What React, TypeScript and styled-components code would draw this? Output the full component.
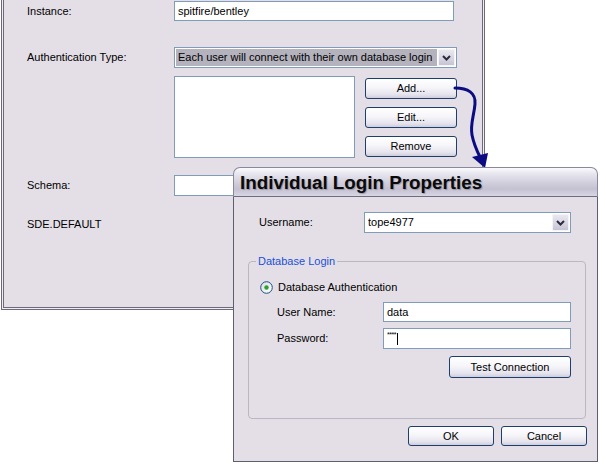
import React from "react";
import styled, { createGlobalStyle } from "styled-components";

const GlobalStyle = createGlobalStyle`
  html, body {
    margin: 0;
    padding: 0;
    background: #ffffff;
  }
  body {
    font-family: "Liberation Sans", Arial, sans-serif;
    font-size: 11px;
    color: #000;
  }
`;

const Desktop = styled.div`
  position: relative;
  width: 600px;
  height: 466px;
  overflow: hidden;
  background: #ffffff;
`;

/* ---------- the connection properties window behind ---------- */

const BackWindow = styled.div`
  position: absolute;
  left: 1px;
  top: -10px;
  width: 484px;
  height: 320px;
  box-sizing: border-box;
  border: 1px solid #6c6a7a;
  box-shadow: inset 0 0 0 1px #f1eef3, inset 0 0 0 2px #6c6a7a;
  background: #e4dfe7;
  padding: 10px 0 0 25px;
  display: flex;
  flex-direction: column;
`;

const Row = styled.div<{ $gap?: number; $indent?: number }>`
  display: flex;
  align-items: center;
  margin-top: ${(p) => p.$gap ?? 0}px;
  padding-left: ${(p) => p.$indent ?? 0}px;
`;

const TopRow = styled(Row)`
  align-items: flex-start;
`;

const Label = styled.div<{ $w: number }>`
  width: ${(p) => p.$w}px;
  flex: none;
  line-height: 13px;
  white-space: nowrap;
`;

const TextBox = styled.div<{ $w: number; $h?: number }>`
  width: ${(p) => p.$w}px;
  height: ${(p) => p.$h ?? 20}px;
  box-sizing: border-box;
  border: 1px solid #7f9db9;
  background: #ffffff;
  padding: 0 3px;
  display: flex;
  align-items: center;
  line-height: 13px;
  white-space: nowrap;
`;

const ListBox = styled.div`
  width: 181px;
  height: 82px;
  box-sizing: border-box;
  border: 1px solid #7f9db9;
  background: #ffffff;
  flex: none;
`;

const ComboFrame = styled.div<{ $w: number }>`
  width: ${(p) => p.$w}px;
  height: 21px;
  box-sizing: border-box;
  border: 1px solid #7f9db9;
  background: #ffffff;
  display: flex;
  align-items: stretch;
  padding: 1px;
  gap: 1px;
`;

const ComboText = styled.div<{ $selected?: boolean }>`
  flex: 1;
  display: flex;
  align-items: center;
  padding: 0 2px;
  line-height: 13px;
  white-space: nowrap;
  overflow: hidden;
  background: ${(p) => (p.$selected ? "#b3b2bd" : "transparent")};
`;

const DropButton = styled.div`
  width: 17px;
  flex: none;
  box-sizing: border-box;
  border: 1px solid #f4f3f8;
  border-radius: 1px;
  background: linear-gradient(180deg, #e9e8f0 0%, #d6d4e0 60%, #c6c4d3 100%);
  display: flex;
  align-items: center;
  justify-content: center;
`;

const ButtonStack = styled.div`
  display: flex;
  flex-direction: column;
  gap: 8px;
  margin: 2px 0 0 10px;
`;

const Button = styled.div<{ $w: number; $h?: number }>`
  width: ${(p) => p.$w}px;
  height: ${(p) => p.$h ?? 21}px;
  box-sizing: border-box;
  border: 1px solid #1d3f6a;
  border-radius: 3px;
  background: linear-gradient(
    180deg,
    #ffffff 0%,
    #f6f5f9 45%,
    #e6e5ee 80%,
    #cfcddd 100%
  );
  display: flex;
  align-items: center;
  justify-content: center;
  line-height: 13px;
  white-space: nowrap;
`;

const Chevron = () => (
  <svg width="9" height="6" viewBox="0 0 9 6">
    <path d="M1 1 L4.5 4.5 L8 1" fill="none" stroke="#2c2c3e" strokeWidth="2" />
  </svg>
);

/* ---------- the individual login dialog in front ---------- */

const Dialog = styled.div`
  position: absolute;
  left: 233px;
  top: 167px;
  width: 365px;
  height: 295px;
  display: flex;
  flex-direction: column;
`;

const TitleBar = styled.div`
  height: 30px;
  flex: none;
  box-sizing: border-box;
  border: 1px solid #8a889c;
  border-bottom: 1px solid #6e6c80;
  border-radius: 7px 7px 0 0;
  background: linear-gradient(
    180deg,
    #fbfbfd 0%,
    #e9e8f0 18%,
    #cfcddb 55%,
    #c4c2d2 75%,
    #d8d6e3 100%
  );
  padding: 0 0 0 6px;
  display: flex;
  align-items: center;
`;

const TitleText = styled.div`
  font-size: 18.8px;
  font-weight: bold;
  color: #0a0a0a;
  line-height: 22px;
  padding-top: 2px;
  text-shadow: 1px 1px 1px rgba(60, 58, 80, 0.35);
  white-space: nowrap;
`;

const DialogBody = styled.div`
  flex: 1;
  box-sizing: border-box;
  border: 1px solid #5f5d72;
  border-top: none;
  background: #e4dfe7;
  padding: 15px 10px 0 14px;
  display: flex;
  flex-direction: column;
`;

const GroupBox = styled.fieldset`
  width: 338px;
  box-sizing: border-box;
  margin: 22px 0 0 0;
  padding: 0;
  border: 1px solid #b9b7c4;
  border-radius: 4px;
  min-width: 0;
`;

const GroupTitle = styled.legend`
  margin-left: 7px;
  padding: 0 2px;
  color: #1a4fd6;
  line-height: 13px;
`;

const GroupInner = styled.div`
  padding: 12px 14px 40px 11px;
  display: flex;
  flex-direction: column;
`;

const RadioRow = styled.div`
  display: flex;
  align-items: center;
  gap: 5px;
  height: 14px;
  line-height: 13px;
`;

const RadioDot = () => (
  <svg width="13" height="13" viewBox="0 0 13 13">
    <defs>
      <linearGradient id="radioFill" x1="0" y1="0" x2="1" y2="1">
        <stop offset="0" stopColor="#dcdbe4" />
        <stop offset="1" stopColor="#ffffff" />
      </linearGradient>
    </defs>
    <circle cx="6.5" cy="6.5" r="5.8" fill="url(#radioFill)" stroke="#1c5180" strokeWidth="1" />
    <circle cx="6.5" cy="6.5" r="2.2" fill="#29a329" />
  </svg>
);

const Masked = styled.span`
  font-size: 7px;
  letter-spacing: -0.5px;
  line-height: 7px;
  align-self: flex-start;
  margin-top: 2px;
`;

const Caret = styled.span`
  width: 1px;
  height: 12px;
  background: #000;
  margin-left: 1px;
`;

const EndRow = styled.div<{ $gap: number }>`
  display: flex;
  justify-content: flex-end;
  gap: 7px;
  margin-top: ${(p) => p.$gap}px;
`;

const Arrow = () => (
  <svg
    width="600"
    height="466"
    viewBox="0 0 600 466"
    style={{ position: "absolute", left: 0, top: 0, pointerEvents: "none" }}
  >
    <path
      d="M455 88 C468 88 476 93 475 104 C474 116 470 124 472 135 C474 145 477 151 480 157"
      fill="none"
      stroke="#0c0c82"
      strokeWidth="3"
      strokeLinecap="round"
    />
    <polygon points="472,157 488,153 485,168" fill="#0c0c82" />
  </svg>
);

export default function App() {
  return (
    <>
      <GlobalStyle />
      <Desktop>
        <BackWindow>
          <Row>
            <Label $w={147}>Instance:</Label>
            <TextBox $w={280}>spitfire/bentley</TextBox>
          </Row>
          <Row $gap={26}>
            <Label $w={147}>Authentication Type:</Label>
            <ComboFrame $w={283}>
              <ComboText $selected>Each user will connect with their own database login</ComboText>
              <DropButton>
                <Chevron />
              </DropButton>
            </ComboFrame>
          </Row>
          <TopRow $gap={8}>
            <Label $w={147} />
            <ListBox />
            <ButtonStack>
              <Button $w={92}>Add...</Button>
              <Button $w={92}>Edit...</Button>
              <Button $w={92}>Remove</Button>
            </ButtonStack>
          </TopRow>
          <Row $gap={17}>
            <Label $w={147}>Schema:</Label>
            <TextBox $w={280} $h={21} />
          </Row>
          <Row $gap={22}>
            <Label $w={147}>SDE.DEFAULT</Label>
          </Row>
        </BackWindow>

        <Arrow />

        <Dialog>
          <TitleBar>
            <TitleText>Individual Login Properties</TitleText>
          </TitleBar>
          <DialogBody>
            <Row $indent={11}>
              <Label $w={105}>Username:</Label>
              <ComboFrame $w={207}>
                <ComboText>tope4977</ComboText>
                <DropButton>
                  <Chevron />
                </DropButton>
              </ComboFrame>
            </Row>
            <GroupBox>
              <GroupTitle>Database Login</GroupTitle>
              <GroupInner>
                <RadioRow>
                  <RadioDot />
                  Database Authentication
                </RadioRow>
                <Row $gap={8} $indent={17}>
                  <Label $w={106}>User Name:</Label>
                  <TextBox $w={188}>data</TextBox>
                </Row>
                <Row $gap={6} $indent={17}>
                  <Label $w={106}>Password:</Label>
                  <TextBox $w={188} $h={21}>
                    <Masked>****</Masked>
                    <Caret />
                  </TextBox>
                </Row>
                <EndRow $gap={7}>
                  <Button $w={122} $h={22}>
                    Test Connection
                  </Button>
                </EndRow>
              </GroupInner>
            </GroupBox>
            <EndRow $gap={7}>
              <Button $w={86} $h={20}>
                OK
              </Button>
              <Button $w={86} $h={20}>
                Cancel
              </Button>
            </EndRow>
          </DialogBody>
        </Dialog>
      </Desktop>
    </>
  );
}
